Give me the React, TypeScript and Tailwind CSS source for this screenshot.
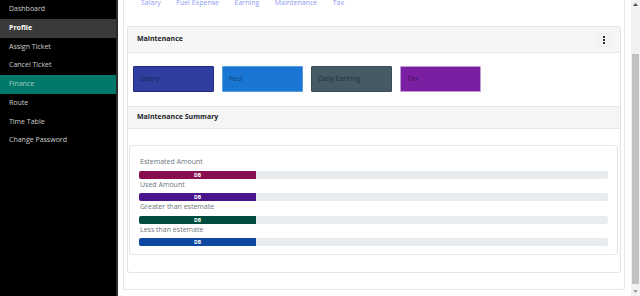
import React from "react";

const navItems = [
  { label: "Dashboard", state: "normal" },
  { label: "Profile", state: "profile" },
  { label: "Assign Ticket", state: "normal" },
  { label: "Cancel Ticket", state: "normal" },
  { label: "Finance", state: "active" },
  { label: "Route", state: "normal" },
  { label: "Time Table", state: "normal" },
  { label: "Change Password", state: "normal" },
];

const tabs = ["Salary", "Fuel Expense", "Earning", "Maintenance", "Tax"];

const boxes = [
  { label: "Salary", cls: "bg-[#303f9f] border-[#1f2a80]" },
  { label: "Feul", cls: "bg-[#1976d2] border-[#5a9ce0]" },
  { label: "Daily Earning", cls: "bg-[#455a64] border-[#3a4c55]" },
  { label: "Tax", cls: "bg-[#7b1fa2] border-[#c09ad2]" },
];

const bars = [
  { label: "Estemated Amount", fill: "bg-[#880e4f]" },
  { label: "Used Amount", fill: "bg-[#4a148c]" },
  { label: "Greater than estemate", fill: "bg-[#004d40]" },
  { label: "Less than estemate", fill: "bg-[#0d47a1]" },
];

export default function App() {
  return (
    <div className="flex h-[296px] w-[640px] overflow-hidden bg-white font-['Open_Sans',sans-serif]">
      {/* Sidebar */}
      <aside className="w-[118px] shrink-0 bg-black border-r-2 border-[#2c2c2c]">
        {navItems.map((item) => (
          <div
            key={item.label}
            className={
              item.state === "profile"
                ? "h-[18.75px] flex items-center pl-[9px] text-[7px] font-bold text-white bg-[#3a3a3a]"
                : item.state === "active"
                ? "h-[18.75px] flex items-center pl-[9px] text-[7px] text-[#a9c9c2] bg-[#00796b]"
                : "h-[18.75px] flex items-center pl-[9px] text-[7px] text-[#cfcfcf]"
            }
          >
            {item.label}
          </div>
        ))}
      </aside>

      {/* Main */}
      <main className="flex-1 min-w-0 overflow-hidden pl-[5px] pr-[6px]">
        <div className="-mt-[10px] border border-[#e6e6e6] rounded-[2px] px-[3px] pt-[6px] pb-[16px]">
          <div className="h-[12px] flex items-center gap-[15.5px] pl-[14px] text-[7px] leading-[12px] text-[#8e9cf0]">
            {tabs.map((t) => (
              <span key={t}>{t}</span>
            ))}
          </div>

          <div className="mt-[17px] border border-[#e3e3e3] rounded-[3px]">
            <div className="h-[26px] border-b border-[#e6e6e6] bg-[#f6f6f6] flex items-center justify-between pl-[9px] pr-[9px]">
              <span className="text-[7px] font-bold text-[#212529]">Maintenance</span>
              <div className="w-[14px] h-[14px] rounded-[2px] bg-[#f2f2f2] flex flex-col items-center justify-center gap-[1px]">
                <span className="block w-[2px] h-[2px] bg-[#333]" />
                <span className="block w-[2px] h-[2px] bg-[#333]" />
                <span className="block w-[2px] h-[2px] bg-[#333]" />
              </div>
            </div>

            <div className="pt-[13px] px-[5px] flex gap-[8px]">
              {boxes.map((b) => (
                <div
                  key={b.label}
                  className={`w-[81px] h-[26px] border rounded-[1px] flex items-center pl-[6px] text-[7px] text-black/50 ${b.cls}`}
                >
                  {b.label}
                </div>
              ))}
            </div>

            <div className="mt-[14px] h-[23px] border-y border-[#e6e6e6] bg-[#f5f5f5] flex items-center pl-[9px]">
              <span className="text-[7px] font-bold text-[#212529]">Maintenance Summary</span>
            </div>

            <div className="mt-[16px] ml-[1px] mr-[2px] mb-[17px] border border-[#e6e6e6] rounded-[3px] pl-[9px] pr-[9px] pt-[10px] pb-[8px]">
              {bars.map((b) => (
                <div key={b.label}>
                  <div className="h-[11px] leading-[11px] text-[7px] text-[#6c757d] pl-[1px]">{b.label}</div>
                  <div className="mt-[3.5px] h-[8px] rounded-[2px] bg-[#e9ecef] overflow-hidden flex">
                    <div className={`w-[25%] h-full flex items-center justify-center text-[5px] font-bold text-white leading-[8px] ${b.fill}`}>
                      DB
                    </div>
                  </div>
                </div>
              ))}
            </div>
          </div>
        </div>
      </main>

      {/* Scrollbar */}
      <div className="w-[9px] shrink-0 bg-[#f1f1f1] flex flex-col">
        <div className="h-[9px] flex items-center justify-center">
          <svg width="5" height="3" viewBox="0 0 5 3">
            <polygon points="2.5,0 5,3 0,3" fill="#505050" />
          </svg>
        </div>
        <div className="h-[45px]" />
        <div className="h-[230px] mx-[1px] bg-[#c1c1c1]" />
        <div className="flex-1" />
        <div className="h-[9px] flex items-center justify-center">
          <svg width="5" height="3" viewBox="0 0 5 3">
            <polygon points="0,0 5,0 2.5,3" fill="#a0a0a0" />
          </svg>
        </div>
      </div>
    </div>
  );
}
